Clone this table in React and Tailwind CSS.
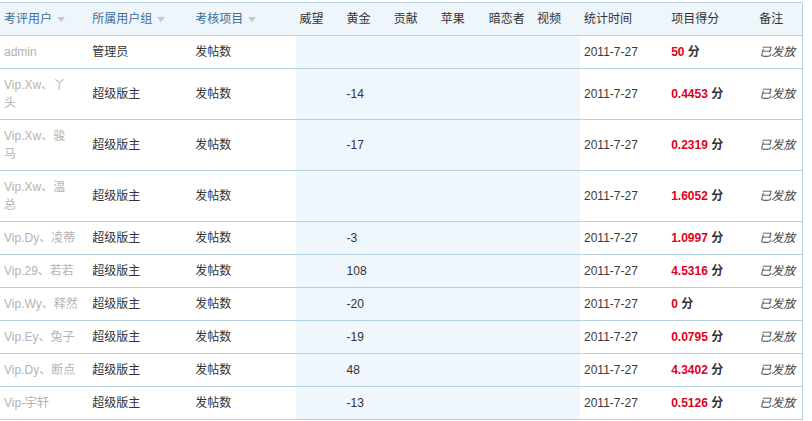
const rows = [
  { user: ["admin"], group: "管理员", gold: "", score: "50", tall: false },
  { user: ["Vip.Xw、丫", "头"], group: "超级版主", gold: "-14", score: "0.4453" },
  { user: ["Vip.Xw、骏", "马"], group: "超级版主", gold: "-17", score: "0.2319" },
  { user: ["Vip.Xw、温", "总"], group: "超级版主", gold: "", score: "1.6052" },
  { user: ["Vip.Dy、凌蒂"], group: "超级版主", gold: "-3", score: "1.0997" },
  { user: ["Vip.29、若若"], group: "超级版主", gold: "108", score: "4.5316" },
  { user: ["Vip.Wy、释然"], group: "超级版主", gold: "-20", score: "0" },
  { user: ["Vip.Ey、兔子"], group: "超级版主", gold: "-19", score: "0.0795" },
  { user: ["Vip.Dy、断点"], group: "超级版主", gold: "48", score: "4.3402" },
  { user: ["Vip-宇轩"], group: "超级版主", gold: "-13", score: "0.5126" },
];

const Arrow = () => (
  <svg width="8" height="5" viewBox="0 0 8 5" className="ml-[5px] inline-block align-middle">
    <path d="M0 0 H8 L4 5 Z" fill="#c2c8cd" />
  </svg>
);

const headers = [
  { label: "考评用户", w: "w-[88px]", sort: true },
  { label: "所属用户组", w: "w-[103px]", sort: true },
  { label: "考核项目", w: "w-[104px]", sort: true },
  { label: "威望", w: "w-[47px]" },
  { label: "黄金", w: "w-[47px]" },
  { label: "贡献", w: "w-[47px]" },
  { label: "苹果", w: "w-[48px]" },
  { label: "暗恋者", w: "w-[48px]" },
  { label: "视频", w: "w-[47px]" },
  { label: "统计时间", w: "w-[87px]" },
  { label: "项目得分", w: "w-[88px]" },
  { label: "备注", w: "w-[47px]" },
];

const App = () => {
  return (
    <div
      className="w-[812px] h-[421px] bg-white overflow-hidden pt-[2px]"
      style={{ fontFamily: '"Liberation Sans", "Noto Sans CJK SC", sans-serif' }}
    >
      <table className="w-[803px] table-fixed border-collapse text-[12px] leading-[18px] border-t border-r border-[#b5d1e1]">
        <thead>
          <tr className="bg-[#eef5fb] h-[33px] border-b border-[#b5d1e1]">
            {headers.map((h) => (
              <th
                key={h.label}
                className={`${h.w} pl-[4px] pr-0 text-left font-normal whitespace-nowrap ${
                  h.sort ? "text-[#3b6d9c]" : "text-[#333]"
                }`}
              >
                {h.label}
                {h.sort && <Arrow />}
              </th>
            ))}
          </tr>
        </thead>
        <tbody>
          {rows.map((r, i) => (
            <tr key={i} className="border-b border-[#b5d1e1] text-[#333]">
              <td className="pl-[4px] py-[7px] text-[#b3b3b3] whitespace-nowrap">
                {r.user.map((u, j) => (
                  <div key={j}>{u}</div>
                ))}
              </td>
              <td className="pl-[4px]">{r.group}</td>
              <td className="pl-[4px]">发帖数</td>
              <td className="bg-[#eff6fc]"></td>
              <td className="bg-[#eff6fc] pl-[4px]">{r.gold}</td>
              <td className="bg-[#eff6fc]"></td>
              <td className="bg-[#eff6fc]"></td>
              <td className="bg-[#eff6fc]"></td>
              <td className="bg-[#eff6fc]"></td>
              <td className="pl-[4px] text-[#3a3a3a] whitespace-nowrap">2011-7-27</td>
              <td className="pl-[4px] whitespace-nowrap font-bold">
                <span className="text-[#e0001b]">{r.score}</span>
                <span className="text-[#333]"> 分</span>
              </td>
              <td className="pl-[4px] italic text-[#444] whitespace-nowrap">已发放</td>
            </tr>
          ))}
        </tbody>
      </table>
    </div>
  );
};

export default App;
